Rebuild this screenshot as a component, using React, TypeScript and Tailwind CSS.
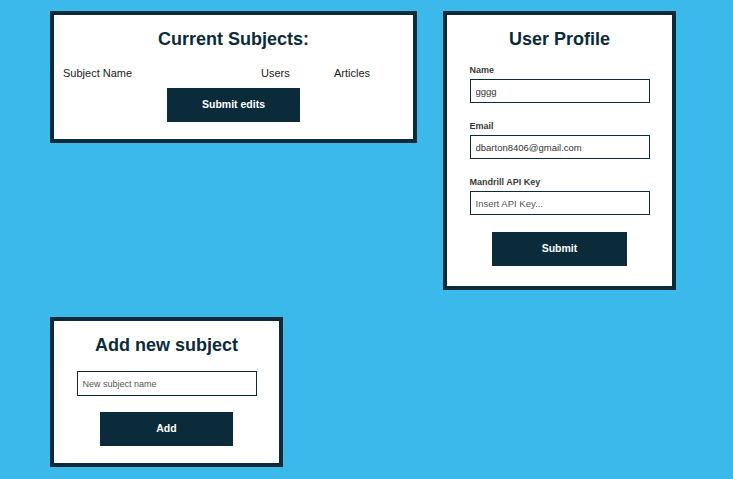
export default function App() {
  return (
    <div
      className="min-h-screen bg-[#3bb9eb] pl-[50px] pt-[11px]"
      style={{ fontFamily: '"Liberation Sans", Arial, sans-serif' }}
    >
      <div className="flex w-[683px] flex-wrap items-start gap-x-[26px] gap-y-[27px]">
        {/* subjects list */}
        <div className="w-[367px] border-4 border-[#0b2b3a] bg-white pt-[13px] pb-[17px]">
          <h2 className="text-center text-[18px] leading-[22px] font-bold text-[#0b2b3a]">
            Current Subjects:
          </h2>
          <div className="mt-[17px] grid grid-cols-[198px_73px_1fr] pl-[9px] text-[11px] leading-[13px] text-[#1a1a1a]">
            <span>Subject Name</span>
            <span>Users</span>
            <span>Articles</span>
          </div>
          <div className="mt-[8px] flex justify-center">
            <button className="h-[34px] w-[133px] bg-[#0b2b3a] text-[10.5px] font-bold text-white">
              Submit edits
            </button>
          </div>
        </div>

        {/* profile */}
        <div className="w-[233px] border-4 border-[#0b2b3a] bg-white pt-[13px] pb-[20px]">
          <h2 className="text-center text-[18px] leading-[22px] font-bold text-[#0b2b3a]">
            User Profile
          </h2>
          <form className="mx-auto mt-[15px] w-[180px]">
            <label className="block text-[9px] leading-[11px] font-bold text-[#3a3a3a]">Name</label>
            <input
              defaultValue="gggg"
              className="mt-[3px] block h-[24px] w-full border border-[#0b2b3a] pl-[5px] text-[9.5px] text-[#333] outline-none"
            />
            <label className="mt-[18px] block text-[9px] leading-[11px] font-bold text-[#3a3a3a]">Email</label>
            <input
              defaultValue="dbarton8406@gmail.com"
              className="mt-[3px] block h-[24px] w-full border border-[#0b2b3a] pl-[5px] text-[9.5px] text-[#333] outline-none"
            />
            <label className="mt-[18px] block text-[9px] leading-[11px] font-bold text-[#3a3a3a]">
              Mandrill API Key
            </label>
            <input
              placeholder="Insert API Key..."
              className="mt-[3px] block h-[24px] w-full border border-[#0b2b3a] pl-[5px] text-[9.5px] text-[#333] outline-none placeholder:text-[#555]"
            />
            <div className="mt-[17px] flex justify-center">
              <button type="button" className="h-[34px] w-[135px] bg-[#0b2b3a] text-[10.5px] font-bold text-white">
                Submit
              </button>
            </div>
          </form>
        </div>

        {/* add subject */}
        <div className="w-[233px] border-4 border-[#0b2b3a] bg-white pt-[13px] pb-[17px]">
          <h2 className="text-center text-[18px] leading-[22px] font-bold text-[#0b2b3a]">
            Add new subject
          </h2>
          <input
            placeholder="New subject name"
            className="mx-auto mt-[15px] block h-[25px] w-[180px] border border-[#0b2b3a] pl-[5px] text-[9px] text-[#333] outline-none placeholder:text-[#555]"
          />
          <div className="mt-[16px] flex justify-center">
            <button className="h-[34px] w-[133px] bg-[#0b2b3a] text-[10.5px] font-bold text-white">Add</button>
          </div>
        </div>
      </div>
    </div>
  );
}
